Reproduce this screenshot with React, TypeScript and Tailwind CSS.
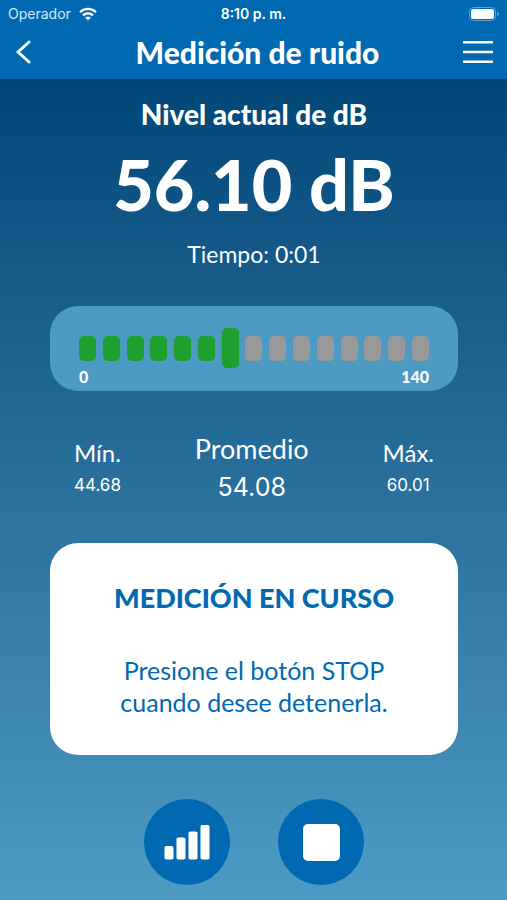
import React from "react";

const SEGMENTS = 15;
const ACTIVE_SEGMENT = 6;

function StatusBar() {
  return (
    <div className="grid h-7 grid-cols-3 items-center px-2 font-['Inter',sans-serif] text-sm leading-4">
      <div className="flex items-center gap-2 text-[#d5e8f7]">
        <span>Operador</span>
        <svg viewBox="0 0 18 14" className="h-3.5 w-[18px]" fill="none" stroke="white" strokeWidth="2.3" aria-hidden="true">
          <path d="M1 5.2a11.3 11.3 0 0 1 16 0" />
          <path d="M4 8.4a7.1 7.1 0 0 1 10 0" />
          <path d="M9 13.6 6.2 10.8a4 4 0 0 1 5.6 0z" fill="white" stroke="none" />
        </svg>
      </div>
      <time className="text-center font-semibold">8:10 p. m.</time>
      <svg viewBox="0 0 30 14" className="h-3.5 w-[30px] justify-self-end" aria-label="Batería" role="img">
        <rect x="0.5" y="0.5" width="26" height="13" rx="4" fill="none" stroke="#5fa3d3" />
        <rect x="2" y="2" width="23" height="10" rx="2.5" fill="white" />
        <path d="M28 5v4q2-.6 2-2t-2-2z" fill="#5fa3d3" />
      </svg>
    </div>
  );
}

function Header() {
  return (
    <header className="bg-[#0069b2]">
      <StatusBar />
      <div className="flex h-[51px] items-start justify-between px-3.5">
        <button type="button" aria-label="Atrás" className="flex h-12 w-10 items-center">
          <svg viewBox="0 0 18 24" className="h-6 w-[18px]" fill="none" stroke="white" strokeWidth="3" strokeLinecap="round" strokeLinejoin="round">
            <path d="M15 2 4 12l11 10" />
          </svg>
        </button>
        <h1 className="pt-1 pl-2 text-[30px] leading-10 font-black">Medición de ruido</h1>
        <button type="button" aria-label="Menú" className="flex h-12 w-10 items-center justify-end">
          <svg viewBox="0 0 30 24" className="h-6 w-[30px]" stroke="white" strokeWidth="2.4">
            <path d="M0 2.2h30M0 12h30M0 21.8h30" />
          </svg>
        </button>
      </div>
    </header>
  );
}

function Meter() {
  return (
    <section aria-label="Nivel de ruido" className="mt-9 rounded-[28px] bg-[#4d9bc3] px-[29px] pt-[22px] pb-1.5">
      <div className="flex h-10 items-center justify-between">
        {Array.from({ length: SEGMENTS }, (_, i) => (
          <span
            key={i}
            className={
              i === ACTIVE_SEGMENT
                ? "h-10 w-[17px] rounded-[5px] bg-[#1d9f2d]"
                : i < ACTIVE_SEGMENT
                  ? "h-[25px] w-[17px] rounded-[5px] bg-[#1d9f2d]"
                  : "h-[25px] w-[17px] rounded-[5px] bg-[#999999]"
            }
          />
        ))}
      </div>
      <div className="flex justify-between text-base leading-[17px] font-black">
        <span>0</span>
        <span>140</span>
      </div>
    </section>
  );
}

export default function App() {
  return (
    <div className="flex min-h-screen flex-col bg-[#0069b2] font-['Lato',sans-serif] text-white">
      <Header />
      <main className="flex grow flex-col bg-linear-to-b from-[#004778] to-[#4d9bc3] pt-[19px] pr-[49px] pb-[15px] pl-[50px]">
        <section className="text-center">
          <h2 className="text-[28px] leading-8 font-black">Nivel actual de dB</h2>
          <p className="mt-4 text-[70px] leading-[76px] font-black">56.10 dB</p>
          <p className="mt-4 text-[23px] leading-8">Tiempo: 0:01</p>
        </section>

        <Meter />

        <dl className="mt-10 flex items-center justify-between px-6 text-center">
          <div>
            <dt className="text-[24px] leading-8">Mín.</dt>
            <dd className="font-['Inter',sans-serif] text-[17px] leading-8">44.68</dd>
          </div>
          <div>
            <dt className="text-[27px] leading-9">Promedio</dt>
            <dd className="font-['Inter',sans-serif] text-[25px] leading-10">54.08</dd>
          </div>
          <div>
            <dt className="text-[24px] leading-8">Máx.</dt>
            <dd className="font-['Inter',sans-serif] text-[17px] leading-8">60.01</dd>
          </div>
        </dl>

        <section className="mt-9 rounded-[28px] bg-white px-6 pt-[39px] pb-[37px] text-center text-[#0069b2]">
          <h2 className="text-[27px] leading-8 font-black">MEDICIÓN EN CURSO</h2>
          <p className="mt-10 text-[25px] leading-8">
            Presione el botón STOP
            <br />
            cuando desee detenerla.
          </p>
        </section>

        <div className="mt-auto flex justify-center gap-12 pt-8">
          <button type="button" aria-label="Niveles" className="flex size-[86px] items-center justify-center rounded-full bg-[#0069b2]">
            <svg viewBox="0 0 46 36" className="h-9 w-[46px]" fill="white">
              <rect x="0.5" y="22" width="9" height="13.5" rx="1.8" />
              <rect x="12.5" y="13.5" width="9" height="22" rx="1.8" />
              <rect x="24.5" y="7.5" width="9" height="28" rx="1.8" />
              <rect x="36.5" y="1" width="9" height="34.5" rx="1.8" />
            </svg>
          </button>
          <button type="button" aria-label="Detener" className="flex size-[86px] items-center justify-center rounded-full bg-[#0069b2]">
            <span className="size-[37px] rounded-[5px] bg-white" />
          </button>
        </div>
      </main>
    </div>
  );
}
